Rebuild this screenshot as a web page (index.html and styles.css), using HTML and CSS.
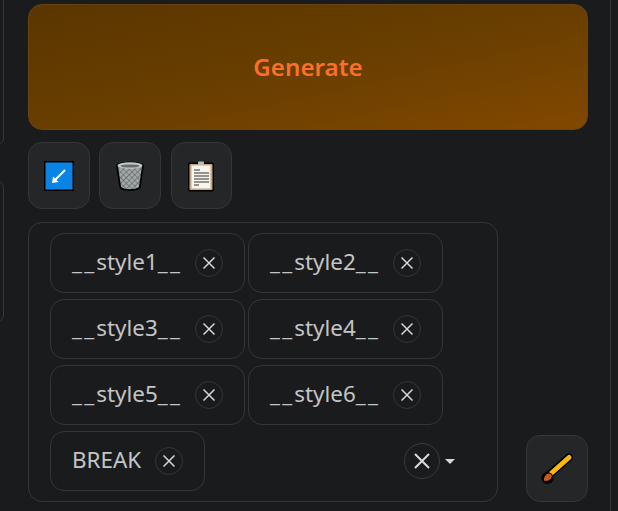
FILE: index.html
```html
<!DOCTYPE html>
<html lang="en">
<head>
<meta charset="utf-8">
<title>Generate</title>
<link rel="stylesheet" href="styles.css">
</head>
<body>
<div class="page">
  <aside class="left-rail">
    <div class="rail-box rail-top"></div>
    <div class="rail-box rail-bottom"></div>
  </aside>
  <main class="column">
    <button class="generate">Generate</button>
    <div class="tools">
      <button class="tool">
        <svg width="30" height="30" viewBox="0 0 30 30"><rect x="0" y="0" width="30" height="30" fill="#000"/><rect x="1.500" y="1.500" width="27" height="27" fill="#0a84e4"/><path d="M21 9 10 20" stroke="#fff" stroke-width="2" fill="none"/><path d="M8 22 9 15.500 14.500 21z" fill="#fff"/></svg>
      </button>
      <button class="tool">
        <svg width="30" height="32" viewBox="0 0 30 32"><defs><pattern id="mesh" width="4" height="4" patternUnits="userSpaceOnUse" patternTransform="rotate(45)"><rect width="4" height="4" fill="#a3a9aa"/><path d="M0 0H4M0 0V4" stroke="#555a5c" stroke-width="1.200"/></pattern></defs><path d="M1 5.500C1 .5 29 .5 29 5.500L25.500 27.500C25 32 5 32 4.500 27.500Z" fill="#000"/><path d="M3 6.500 6 26.500C7 30 23 30 24 26.500L27 6.500Z" fill="url(#mesh)"/><ellipse cx="15" cy="5.500" rx="12.500" ry="3.200" fill="#c4c8c8"/><ellipse cx="15" cy="6" rx="9.500" ry="1.600" fill="#666b6d"/></svg>
      </button>
      <button class="tool">
        <svg width="28" height="32" viewBox="0 0 28 32"><rect x="1" y="2.500" width="26" height="29" rx="2" fill="#000"/><rect x="2.500" y="4" width="23" height="26" rx="1" fill="#c8a57e"/><rect x="4.500" y="5.500" width="19" height="23" fill="#f7f4ec"/><rect x="11" y="1.500" width="6" height="3.500" rx="1" fill="#b9bcbc"/><path d="M7 10h6M7 13h15M7 16h15M7 19h15M7 22h15M7 25h5" stroke="#333" stroke-width="1.100"/></svg>
      </button>
    </div>
    <div class="lower">
      <div class="dropdown">
        <div class="chips">
          <span class="chip"><span class="chip-label"><span class="us">__</span>style1<span class="us">__</span></span><span class="remove"><svg class="x" viewBox="0 0 12 12"><path d="M.500 .500 11.500 11.500M11.500 .500 .500 11.500"/></svg></span></span>
          <span class="chip"><span class="chip-label"><span class="us">__</span>style2<span class="us">__</span></span><span class="remove"><svg class="x" viewBox="0 0 12 12"><path d="M.500 .500 11.500 11.500M11.500 .500 .500 11.500"/></svg></span></span>
          <span class="chip"><span class="chip-label"><span class="us">__</span>style3<span class="us">__</span></span><span class="remove"><svg class="x" viewBox="0 0 12 12"><path d="M.500 .500 11.500 11.500M11.500 .500 .500 11.500"/></svg></span></span>
          <span class="chip"><span class="chip-label"><span class="us">__</span>style4<span class="us">__</span></span><span class="remove"><svg class="x" viewBox="0 0 12 12"><path d="M.500 .500 11.500 11.500M11.500 .500 .500 11.500"/></svg></span></span>
          <span class="chip"><span class="chip-label"><span class="us">__</span>style5<span class="us">__</span></span><span class="remove"><svg class="x" viewBox="0 0 12 12"><path d="M.500 .500 11.500 11.500M11.500 .500 .500 11.500"/></svg></span></span>
          <span class="chip"><span class="chip-label"><span class="us">__</span>style6<span class="us">__</span></span><span class="remove"><svg class="x" viewBox="0 0 12 12"><path d="M.500 .500 11.500 11.500M11.500 .500 .500 11.500"/></svg></span></span>
          <span class="last-row">
            <span class="chip"><span class="chip-label">BREAK</span><span class="remove"><svg class="x" viewBox="0 0 12 12"><path d="M.500 .500 11.500 11.500M11.500 .500 .500 11.500"/></svg></span></span>
            <span class="controls">
              <span class="clear"><svg class="x-big" viewBox="0 0 18 18"><path d="M2 2 16 16M16 2 2 16"/></svg></span>
              <span class="caret"></span>
            </span>
          </span>
        </div>
      </div>
      <button class="tool tool-brush">
        <svg width="32" height="32" viewBox="0 0 32 32"><path d="M28 4.500 9 21" stroke="#000" stroke-width="8" stroke-linecap="round" fill="none"/><path d="M28 4.500 10 20.500" stroke="#f9b80e" stroke-width="5" stroke-linecap="round" fill="none"/><circle cx="6.500" cy="25" r="6" fill="#000"/><path d="M3 27.500C2.500 24 5 20.500 8.500 20.500C11 21 11.500 24 9.500 26C7.500 28 5 28.500 3 27.500Z" fill="#c8591c"/></svg>
      </button>
    </div>
  </main>
  <div class="right-rule"></div>
</div>
</body>
</html>
```
FILE: styles.css
```css
* { box-sizing: border-box; }
html, body { margin: 0; padding: 0; }
body {
  width: 618px;
  height: 511px;
  overflow: hidden;
  background: #1a1b1d;
  font-family: "Noto Sans", sans-serif;
}
.page { display: flex; height: 511px; position: relative; }
.left-rail { width: 28px; flex: none; position: relative; }
.rail-box {
  position: absolute;
  left: -20px;
  width: 24px;
  border: 1px solid #36373a;
  border-radius: 8px;
}
.rail-top { top: -20px; height: 166px; }
.rail-bottom { top: 180px; height: 143px; }
.column { width: 560px; flex: none; padding-top: 4px; }
button { font-family: inherit; padding: 0; cursor: pointer; }
.generate {
  display: block;
  width: 560px;
  height: 126px;
  border: 1px solid #6a4310;
  border-radius: 14px;
  background: linear-gradient(to bottom right, #5a3600 0%, #693e00 50%, #824800 100%);
  color: #f9702a;
  font-size: 24.200px;
  font-weight: 600;
  padding-bottom: 2px;
}
.tools { display: flex; gap: 9.500px; margin-top: 12px; }
.tool {
  width: 61.800px;
  height: 67px;
  display: flex;
  align-items: center;
  justify-content: center;
  background: #242628;
  border: 1px solid #343639;
  border-radius: 14px;
}
.lower { display: flex; align-items: flex-end; justify-content: space-between; margin-top: 13px; }
.dropdown {
  width: 470px;
  height: 280px;
  border: 1px solid #343639;
  border-radius: 14px;
  padding: 10px 21px;
}
.chips { display: flex; flex-wrap: wrap; gap: 6px 3px; }
.chip {
  width: 195px;
  height: 60px;
  display: flex;
  align-items: center;
  justify-content: space-between;
  padding: 0 21px;
  border: 1px solid #343639;
  border-radius: 14px;
  color: #c4c5c7;
  font-size: 22.400px;
}
.chip-label { line-height: 1; padding-bottom: 1px; }
.us { letter-spacing: 2.200px; }
.remove {
  width: 28px;
  height: 28px;
  display: flex;
  align-items: center;
  justify-content: center;
  border: 1px solid #343639;
  border-radius: 50%;
  flex: none;
}
.x { width: 12px; height: 12px; fill: none; stroke: #d8d8d8; stroke-width: 1.500; }
.last-row { width: 100%; display: flex; align-items: center; justify-content: space-between; }
.last-row .chip { width: 155px; }
.controls { display: flex; align-items: center; gap: 5px; margin-right: 21px; }
.clear {
  width: 36px;
  height: 36px;
  display: flex;
  align-items: center;
  justify-content: center;
  border: 1px solid #3a3b3e;
  border-radius: 50%;
}
.x-big { width: 18px; height: 18px; fill: none; stroke: #dcdcdc; stroke-width: 2; }
.caret {
  width: 0;
  height: 0;
  border-left: 5.500px solid transparent;
  border-right: 5.500px solid transparent;
  border-top: 5px solid #d8d8d8;
}
.right-rule { position: absolute; left: 610px; top: 0; bottom: 0; width: 1px; background: #36373a; }
```
